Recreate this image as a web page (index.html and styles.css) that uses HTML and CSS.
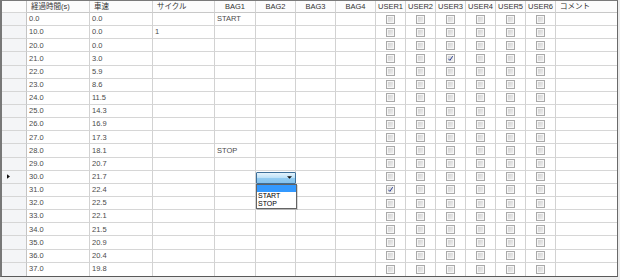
FILE: index.html
```html
<!DOCTYPE html>
<html lang="ja">
<head>
<meta charset="utf-8">
<title>grid</title>
<link rel="stylesheet" href="styles.css">
</head>
<body>
<div class="grid">
  <div class="row head">
    <b class="rh"></b><span>経過時間(s)</span><span>車速</span><span>サイクル</span><span class="ctr">BAG1</span><span class="ctr">BAG2</span><span class="ctr">BAG3</span><span class="ctr">BAG4</span><span class="ctr">USER1</span><span class="ctr">USER2</span><span class="ctr">USER3</span><span class="ctr">USER4</span><span class="ctr">USER5</span><span class="ctr">USER6</span><span>コメント</span>
  </div>
  <div class="row"><b class="rh"></b><span>0.0</span><span>0.0</span><span></span><span>START</span><span></span><span></span><span></span><span class="c"><i></i></span><span class="c"><i></i></span><span class="c"><i></i></span><span class="c"><i></i></span><span class="c"><i></i></span><span class="c"><i></i></span><span></span></div>
  <div class="row"><b class="rh"></b><span>10.0</span><span>0.0</span><span>1</span><span></span><span></span><span></span><span></span><span class="c"><i></i></span><span class="c"><i></i></span><span class="c"><i></i></span><span class="c"><i></i></span><span class="c"><i></i></span><span class="c"><i></i></span><span></span></div>
  <div class="row"><b class="rh"></b><span>20.0</span><span>0.0</span><span></span><span></span><span></span><span></span><span></span><span class="c"><i></i></span><span class="c"><i></i></span><span class="c"><i></i></span><span class="c"><i></i></span><span class="c"><i></i></span><span class="c"><i></i></span><span></span></div>
  <div class="row"><b class="rh"></b><span>21.0</span><span>3.0</span><span></span><span></span><span></span><span></span><span></span><span class="c"><i></i></span><span class="c"><i></i></span><span class="c"><i class="on"><svg viewBox="0 0 7 7"><path d="M1.4 3.8 L2.9 5.4 L5.7 1.2" /></svg></i></span><span class="c"><i></i></span><span class="c"><i></i></span><span class="c"><i></i></span><span></span></div>
  <div class="row"><b class="rh"></b><span>22.0</span><span>5.9</span><span></span><span></span><span></span><span></span><span></span><span class="c"><i></i></span><span class="c"><i></i></span><span class="c"><i></i></span><span class="c"><i></i></span><span class="c"><i></i></span><span class="c"><i></i></span><span></span></div>
  <div class="row"><b class="rh"></b><span>23.0</span><span>8.6</span><span></span><span></span><span></span><span></span><span></span><span class="c"><i></i></span><span class="c"><i></i></span><span class="c"><i></i></span><span class="c"><i></i></span><span class="c"><i></i></span><span class="c"><i></i></span><span></span></div>
  <div class="row"><b class="rh"></b><span>24.0</span><span>11.5</span><span></span><span></span><span></span><span></span><span></span><span class="c"><i></i></span><span class="c"><i></i></span><span class="c"><i></i></span><span class="c"><i></i></span><span class="c"><i></i></span><span class="c"><i></i></span><span></span></div>
  <div class="row"><b class="rh"></b><span>25.0</span><span>14.3</span><span></span><span></span><span></span><span></span><span></span><span class="c"><i></i></span><span class="c"><i></i></span><span class="c"><i></i></span><span class="c"><i></i></span><span class="c"><i></i></span><span class="c"><i></i></span><span></span></div>
  <div class="row"><b class="rh"></b><span>26.0</span><span>16.9</span><span></span><span></span><span></span><span></span><span></span><span class="c"><i></i></span><span class="c"><i></i></span><span class="c"><i></i></span><span class="c"><i></i></span><span class="c"><i></i></span><span class="c"><i></i></span><span></span></div>
  <div class="row"><b class="rh"></b><span>27.0</span><span>17.3</span><span></span><span></span><span></span><span></span><span></span><span class="c"><i></i></span><span class="c"><i></i></span><span class="c"><i></i></span><span class="c"><i></i></span><span class="c"><i></i></span><span class="c"><i></i></span><span></span></div>
  <div class="row"><b class="rh"></b><span>28.0</span><span>18.1</span><span></span><span>STOP</span><span></span><span></span><span></span><span class="c"><i></i></span><span class="c"><i></i></span><span class="c"><i></i></span><span class="c"><i></i></span><span class="c"><i></i></span><span class="c"><i></i></span><span></span></div>
  <div class="row"><b class="rh"></b><span>29.0</span><span>20.7</span><span></span><span></span><span></span><span></span><span></span><span class="c"><i></i></span><span class="c"><i></i></span><span class="c"><i></i></span><span class="c"><i></i></span><span class="c"><i></i></span><span class="c"><i></i></span><span></span></div>
  <div class="row"><b class="rh cur"><svg viewBox="0 0 4 6"><path d="M0 0 L4 3 L0 6 Z"/></svg></b><span>30.0</span><span>21.7</span><span></span><span></span><span class="combo-cell">
      <div class="combo"><svg class="arr" viewBox="0 0 6 3"><path d="M0 0 H6 L3 3 Z"/></svg></div>
      <div class="list"><div class="opt sel"></div><div class="opt">START</div><div class="opt">STOP</div></div>
    </span><span></span><span></span><span class="c"><i></i></span><span class="c"><i></i></span><span class="c"><i></i></span><span class="c"><i></i></span><span class="c"><i></i></span><span class="c"><i></i></span><span></span></div>
  <div class="row"><b class="rh"></b><span>31.0</span><span>22.4</span><span></span><span></span><span></span><span></span><span></span><span class="c"><i class="on"><svg viewBox="0 0 7 7"><path d="M1.4 3.8 L2.9 5.4 L5.7 1.2" /></svg></i></span><span class="c"><i></i></span><span class="c"><i></i></span><span class="c"><i></i></span><span class="c"><i></i></span><span class="c"><i></i></span><span></span></div>
  <div class="row"><b class="rh"></b><span>32.0</span><span>22.5</span><span></span><span></span><span></span><span></span><span></span><span class="c"><i></i></span><span class="c"><i></i></span><span class="c"><i></i></span><span class="c"><i></i></span><span class="c"><i></i></span><span class="c"><i></i></span><span></span></div>
  <div class="row"><b class="rh"></b><span>33.0</span><span>22.1</span><span></span><span></span><span></span><span></span><span></span><span class="c"><i></i></span><span class="c"><i></i></span><span class="c"><i></i></span><span class="c"><i></i></span><span class="c"><i></i></span><span class="c"><i></i></span><span></span></div>
  <div class="row"><b class="rh"></b><span>34.0</span><span>21.5</span><span></span><span></span><span></span><span></span><span></span><span class="c"><i></i></span><span class="c"><i></i></span><span class="c"><i></i></span><span class="c"><i></i></span><span class="c"><i></i></span><span class="c"><i></i></span><span></span></div>
  <div class="row"><b class="rh"></b><span>35.0</span><span>20.9</span><span></span><span></span><span></span><span></span><span></span><span class="c"><i></i></span><span class="c"><i></i></span><span class="c"><i></i></span><span class="c"><i></i></span><span class="c"><i></i></span><span class="c"><i></i></span><span></span></div>
  <div class="row"><b class="rh"></b><span>36.0</span><span>20.4</span><span></span><span></span><span></span><span></span><span></span><span class="c"><i></i></span><span class="c"><i></i></span><span class="c"><i></i></span><span class="c"><i></i></span><span class="c"><i></i></span><span class="c"><i></i></span><span></span></div>
  <div class="row"><b class="rh"></b><span>37.0</span><span>19.8</span><span></span><span></span><span></span><span></span><span></span><span class="c"><i></i></span><span class="c"><i></i></span><span class="c"><i></i></span><span class="c"><i></i></span><span class="c"><i></i></span><span class="c"><i></i></span><span></span></div>
</div>
</body>
</html>
```

FILE: styles.css
```css
* { box-sizing: border-box; }
html, body { margin: 0; padding: 0; }
body {
  width: 620px;
  height: 280px;
  background: #ececec;
  font-family: "Liberation Sans", "Noto Sans CJK JP", sans-serif;
  font-size: 7.5px;
  color: #4a4a4a;
  overflow: hidden;
}
.grid {
  width: 618px;
  background: #fff;
  border-top: 1px solid #7a7a7a;
  border-left: 2px solid #787878;
  border-right: 1px solid #6a6a6a;
  border-bottom: 1px solid #5a5a5a;
  display: flex;
  flex-direction: column;
}
.row {
  display: grid;
  grid-template-columns: 25px 63px 63px 62px 41px 40px 40px 40px 30px 30px 30px 30px 30px 30px 61px;
  height: 13.15px;
}
.row.head {
  height: 12px;
  color: #333;
  font-size: 7.5px;
  background: #fcfcfc;
}
.row > span, .row > b {
  display: flex;
  align-items: center;
  border-right: 1px solid #d2d2d2;
  border-bottom: 1px solid #d6d6d6;
  padding-left: 2px;
  white-space: nowrap;
  overflow: visible;
  line-height: 1;
  font-weight: normal;
}
.row.head > span { padding-left: 4px; border-bottom-color: #c8c8c8; }
.row.head > span.ctr { justify-content: center; padding-left: 0; }
.row:last-child > span, .row:last-child > b { border-bottom: none; }
.row > span:last-child { border-right: none; }
.rh {
  background: #f4f5f7;
  border-right-color: #c4c4c4 !important;
}
.head .rh { background: #fcfcfc; }
.cur { padding-left: 5px !important; }
.cur svg { width: 3px; height: 5px; fill: #111; display: block; }
.c { justify-content: center; padding-left: 0 !important; }
.c i {
  display: block;
  width: 9px;
  height: 9px;
  border: 1px solid #a9a9a9;
  background: linear-gradient(135deg, #cdcdcd 0%, #e4e4e4 60%, #f3f3f3 100%);
  box-shadow: inset 0 0 0 1px #f6f6f6;
  position: relative;
}
.c i.on svg {
  position: absolute;
  left: 0;
  top: 0;
  width: 7px;
  height: 7px;
  fill: none;
  stroke: #34479a;
  stroke-width: 1;
}
.combo-cell { position: relative; }
.combo {
  position: absolute;
  left: 0;
  top: 1px;
  width: 40px;
  height: 12px;
  border: 1px solid #3d6f99;
  border-radius: 1px;
  background: linear-gradient(#e4f3fc 0%, #bfe2f8 45%, #92cbf1 55%, #86c3ee 100%);
  display: flex;
  align-items: center;
  justify-content: flex-end;
  padding-right: 3px;
  z-index: 2;
}
.arr { width: 5px; height: 3px; fill: #111; display: block; }
.list {
  position: absolute;
  left: 0;
  top: 13px;
  width: 41px;
  background: #fff;
  border: 1px solid #646464;
  box-shadow: 1px 1px 0 rgba(0,0,0,0.15);
  z-index: 3;
  padding-bottom: 1px;
}
.opt {
  height: 7.5px;
  line-height: 7.5px;
  font-size: 7px;
  color: #000;
  padding-left: 1px;
}
.opt.sel { background: #3399ff; }
```
